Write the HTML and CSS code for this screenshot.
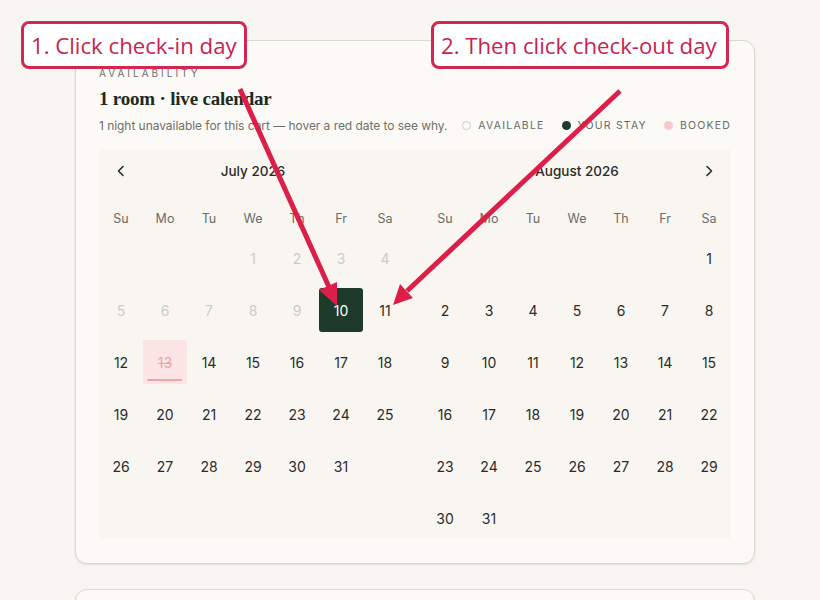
FILE: index.html
```html
<!DOCTYPE html>
<html lang="en">
<head>
<meta charset="utf-8">
<title>Availability</title>
<link rel="stylesheet" href="styles.css">
</head>
<body>
<div class="page">
  <section class="card">
    <div class="eyebrow">AVAILABILITY</div>
    <h2 class="title">1 room · live calendar</h2>
    <div class="subrow">
      <p class="sub">1 night unavailable for this cart — hover a red date to see why.</p>
      <ul class="legend">
        <li><span class="dot dot-avail"></span>AVAILABLE</li>
        <li><span class="dot dot-stay"></span>YOUR STAY</li>
        <li><span class="dot dot-booked"></span>BOOKED</li>
      </ul>
    </div>
    <div class="calendar">
      <div class="month">
        <div class="month-head">
          <button class="nav nav-prev" aria-label="Previous month"><svg width="10" height="12" viewBox="0 0 10 12"><path d="M7 1.5 L2.5 6 L7 10.5" fill="none" stroke="#2a2a2a" stroke-width="1.6" stroke-linecap="round" stroke-linejoin="round"/></svg></button>
          <span class="month-name">July 2026</span>
        </div>
        <div class="weekdays"><span>Su</span><span>Mo</span><span>Tu</span><span>We</span><span>Th</span><span>Fr</span><span>Sa</span></div>
        <div class="days">
          <span class="day empty"></span><span class="day empty"></span><span class="day empty"></span>
          <span class="day past">1</span><span class="day past">2</span><span class="day past">3</span><span class="day past">4</span>
          <span class="day past">5</span><span class="day past">6</span><span class="day past">7</span><span class="day past">8</span><span class="day past">9</span><span class="day selected">10</span><span class="day">11</span>
          <span class="day">12</span><span class="day booked">13</span><span class="day">14</span><span class="day">15</span><span class="day">16</span><span class="day">17</span><span class="day">18</span>
          <span class="day">19</span><span class="day">20</span><span class="day">21</span><span class="day">22</span><span class="day">23</span><span class="day">24</span><span class="day">25</span>
          <span class="day">26</span><span class="day">27</span><span class="day">28</span><span class="day">29</span><span class="day">30</span><span class="day">31</span>
        </div>
      </div>
      <div class="month">
        <div class="month-head">
          <span class="month-name">August 2026</span>
          <button class="nav nav-next" aria-label="Next month"><svg width="10" height="12" viewBox="0 0 10 12"><path d="M3 1.5 L7.5 6 L3 10.5" fill="none" stroke="#2a2a2a" stroke-width="1.6" stroke-linecap="round" stroke-linejoin="round"/></svg></button>
        </div>
        <div class="weekdays"><span>Su</span><span>Mo</span><span>Tu</span><span>We</span><span>Th</span><span>Fr</span><span>Sa</span></div>
        <div class="days">
          <span class="day empty"></span><span class="day empty"></span><span class="day empty"></span><span class="day empty"></span><span class="day empty"></span><span class="day empty"></span>
          <span class="day">1</span>
          <span class="day">2</span><span class="day">3</span><span class="day">4</span><span class="day">5</span><span class="day">6</span><span class="day">7</span><span class="day">8</span>
          <span class="day">9</span><span class="day">10</span><span class="day">11</span><span class="day">12</span><span class="day">13</span><span class="day">14</span><span class="day">15</span>
          <span class="day">16</span><span class="day">17</span><span class="day">18</span><span class="day">19</span><span class="day">20</span><span class="day">21</span><span class="day">22</span>
          <span class="day">23</span><span class="day">24</span><span class="day">25</span><span class="day">26</span><span class="day">27</span><span class="day">28</span><span class="day">29</span>
          <span class="day">30</span><span class="day">31</span>
        </div>
      </div>
    </div>
  </section>
  <section class="card card-next"></section>
</div>

<div class="callout callout-1">1. Click check-in day</div>
<div class="callout callout-2">2. Then click check-out day</div>
<svg class="arrows" width="820" height="600" viewBox="0 0 820 600">
  <g stroke="#dc1f48" stroke-width="5" stroke-linecap="butt">
    <line x1="240" y1="89" x2="329" y2="287"/>
    <line x1="620" y1="91" x2="407" y2="291"/>
  </g>
  <g fill="#dc1f48">
    <polygon points="337,306 319,290 337,282"/>
    <polygon points="393,305 400,284 413,298"/>
  </g>
</svg>
</body>
</html>
```

FILE: styles.css
```css
* { box-sizing: border-box; }
html, body { margin: 0; padding: 0; }
body {
  background: #f8f6f2;
  font-family: Inter, "Noto Sans", sans-serif;
  color: #2a2a2a;
  width: 820px;
  height: 600px;
  overflow: hidden;
  position: relative;
}
.page {
  padding: 40px 0 0 75px;
  display: flex;
  flex-direction: column;
  gap: 25px;
}
.card {
  width: 680px;
  background: #fcfaf7;
  border: 1px solid #ddd7ce;
  border-radius: 12px;
  box-shadow: 0 1px 2px rgba(60, 50, 30, 0.12);
  padding: 25px 23px 24px;
}
.card-next { height: 80px; }
.eyebrow {
  font-size: 10px;
  letter-spacing: 3px;
  color: #6f6f6a;
  line-height: 14px;
}
.title {
  font-family: "Liberation Serif", "DejaVu Serif", serif;
  font-weight: 600;
  font-size: 19px;
  letter-spacing: -0.2px;
  color: #1d2a21;
  margin: 7px 0 0;
  line-height: 24px;
}
.subrow {
  display: flex;
  align-items: center;
  justify-content: space-between;
  margin-top: 6px;
  height: 16px;
}
.sub {
  margin: 0;
  font-size: 12px;
  color: #6f6f6a;
  letter-spacing: -0.05px;
}
.legend {
  list-style: none;
  margin: 0;
  padding: 0;
  display: flex;
  gap: 17px;
  font-size: 10.5px;
  letter-spacing: 1.2px;
  color: #6a6a66;
}
.legend li { display: flex; align-items: center; gap: 7px; }
.dot { width: 9px; height: 9px; border-radius: 50%; display: inline-block; }
.dot-avail { border: 1px solid #cfcac2; background: #fcfaf7; }
.dot-stay { background: #1e3a2a; }
.dot-booked { background: #f8c9cc; }

.calendar {
  margin-top: 16px;
  background: #f9f6f2;
  border-radius: 4px;
  display: flex;
  gap: 16px;
  height: 390px;
}
.month { width: 308px; }
.month-head {
  height: 44px;
  position: relative;
  display: flex;
  align-items: center;
  justify-content: center;
}
.month-name { font-size: 13.5px; font-weight: 500; color: #2a2a28; }
.nav {
  position: absolute;
  top: 0;
  width: 44px;
  height: 44px;
  border: 0;
  background: none;
  padding: 0;
  display: flex;
  align-items: center;
  justify-content: center;
}
.nav-prev { left: 0; }
.nav-next { right: 0; }
.weekdays {
  display: grid;
  grid-template-columns: repeat(7, 44px);
  height: 43px;
  padding-top: 7px;
  font-size: 12.5px;
  color: #6b6b66;
}
.weekdays span { display: flex; align-items: center; justify-content: center; }
.days {
  display: grid;
  grid-template-columns: repeat(7, 44px);
  grid-auto-rows: 44px;
  row-gap: 8px;
}
.day {
  display: flex;
  align-items: center;
  justify-content: center;
  font-size: 14px;
  color: #2b2b29;
  border-radius: 3px;
  position: relative;
}
.day.past { color: #cfcbc4; }
.day.selected { background: #1e3a2a; color: #ffffff; }
.day.booked {
  background: #fde5e5;
  color: #eba3a8;
  text-decoration: line-through;
  border-radius: 0;
}
.day.booked::after {
  content: "";
  position: absolute;
  left: 4px;
  right: 5px;
  bottom: 3px;
  height: 2px;
  border-radius: 1px;
  background: #f2a3aa;
}

.callout {
  position: absolute;
  top: 21px;
  height: 48px;
  background: #ffffff;
  border: 3px solid #d42650;
  border-radius: 8px;
  font-family: "Open Sans", "Noto Sans", sans-serif;
  font-size: 22.2px;
  color: #c8234f;
  display: flex;
  align-items: center;
  padding: 0 7px;
  white-space: nowrap;
}
.callout-1 { left: 21px; width: 226px; }
.callout-2 { left: 431px; width: 298px; }
.arrows { position: absolute; left: 0; top: 0; pointer-events: none; }
```
